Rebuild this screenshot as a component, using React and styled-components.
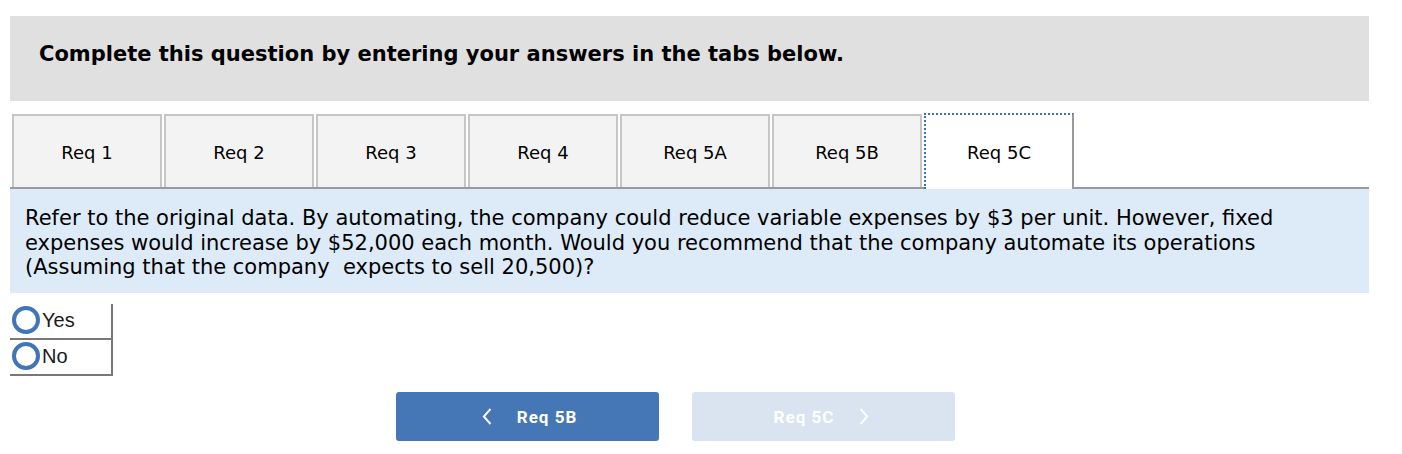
import React, { useState } from 'react';
import styled, { createGlobalStyle } from 'styled-components';

const GlobalStyle = createGlobalStyle`
  body {
    margin: 0;
    background: #fff;
    font-family: "DejaVu Sans", Verdana, sans-serif;
    color: #000;
  }
`;

const Page = styled.div`
  width: 1359px;
  padding: 16px 0 0 10px;
`;

const Header = styled.div`
  height: 85px;
  background: #e0e0e0;
  display: flex;
  align-items: center;
  padding: 0 0 10px 29px;
  box-sizing: border-box;
  font-weight: bold;
  font-size: 21px;
`;

const TabRow = styled.div`
  margin-top: 12px;
  display: flex;
  gap: 2px;
  padding-left: 2px;
  border-bottom: 2px solid #9a9a9a;
  height: 74px;
`;

const Tab = styled.button`
  width: 150px;
  box-sizing: border-box;
  margin-top: ${(p) => (p.$active ? '0' : '1px')};
  height: ${(p) => (p.$active ? '76px' : '73px')};
  margin-bottom: ${(p) => (p.$active ? '-2px' : '0')};
  background: ${(p) => (p.$active ? '#fff' : '#f3f3f3')};
  border: 2px solid #c6c6c6;
  border-bottom: none;
  ${(p) =>
    p.$active &&
    `
    border-top: 2px dotted #3d72b8;
    border-left: 2px dotted #3d72b8;
    border-right: 2px solid #9a9a9a;
  `}
  font-family: "DejaVu Sans", Verdana, sans-serif;
  font-size: 18px;
  color: #000;
  padding: ${(p) => (p.$active ? '1px 0 0' : '2px 0 0')};
  cursor: pointer;
`;

const Prompt = styled.div`
  background: #ddebf8;
  padding: 17px 15px 16px;
  font-size: 21px;
  line-height: 24.5px;
  height: 104px;
  box-sizing: border-box;
`;

const Choices = styled.div`
  margin-top: 11px;
  width: 101px;
  border-right: 2px solid #787878;
`;

const Choice = styled.label`
  display: flex;
  align-items: center;
  padding-bottom: 2px;
  box-sizing: border-box;
  height: 36px;
  border-bottom: 2px solid #787878;
  font-family: "Liberation Sans", Arial, sans-serif;
  font-size: 20px;
  color: #1a1a1a;
  cursor: pointer;
`;

const Ring = styled.span`
  width: 28px;
  height: 28px;
  box-sizing: border-box;
  border-radius: 50%;
  border: 4px solid #4275b8;
  margin: 0 2px 0 2px;
  flex: none;
`;

const Nav = styled.div`
  margin-top: 16px;
  display: flex;
  gap: 33px;
  padding-left: 386px;
`;

const NavButton = styled.button`
  width: 263px;
  height: 49px;
  border: none;
  border-radius: 3px;
  background: ${(p) => (p.$disabled ? '#d9e4f0' : '#4576b5')};
  color: #fff;
  font-family: Roboto, "Liberation Sans", sans-serif;
  font-weight: bold;
  font-size: 17px;
  letter-spacing: 1px;
  display: flex;
  align-items: center;
  justify-content: center;
  gap: 25px;
  padding: ${(p) => (p.$disabled ? '0 4px 0 0' : '0 0 0 4px')};
  cursor: ${(p) => (p.$disabled ? 'default' : 'pointer')};
`;

const Chevron = ({ dir }) => (
  <svg width="10" height="17" viewBox="0 0 10 17" fill="none">
    <path
      d={dir === 'left' ? 'M8.5 1 L1.8 8.5 L8.5 16' : 'M1.5 1 L8.2 8.5 L1.5 16'}
      stroke="#fff"
      strokeWidth="1.9"
    />
  </svg>
);

const tabs = ['Req 1', 'Req 2', 'Req 3', 'Req 4', 'Req 5A', 'Req 5B', 'Req 5C'];

export default function App() {
  const [active, setActive] = useState('Req 5C');
  const [answer, setAnswer] = useState(null);

  return (
    <Page>
      <GlobalStyle />
      <Header>Complete this question by entering your answers in the tabs below.</Header>
      <TabRow>
        {tabs.map((t) => (
          <Tab key={t} $active={t === active} onClick={() => setActive(t)}>
            {t}
          </Tab>
        ))}
      </TabRow>
      <Prompt>
        Refer to the original data. By automating, the company could reduce variable expenses by $3 per unit. However, fixed
        <br />
        expenses would increase by $52,000 each month. Would you recommend that the company automate its operations
        <br />
        (Assuming that the company&nbsp; expects to sell 20,500)?
      </Prompt>
      <Choices>
        {['Yes', 'No'].map((c) => (
          <Choice key={c} onClick={() => setAnswer(c)}>
            <Ring />
            {c}
          </Choice>
        ))}
      </Choices>
      <Nav>
        <NavButton>
          <Chevron dir="left" />
          Req 5B
        </NavButton>
        <NavButton $disabled>
          Req 5C
          <Chevron dir="right" />
        </NavButton>
      </Nav>
    </Page>
  );
}
